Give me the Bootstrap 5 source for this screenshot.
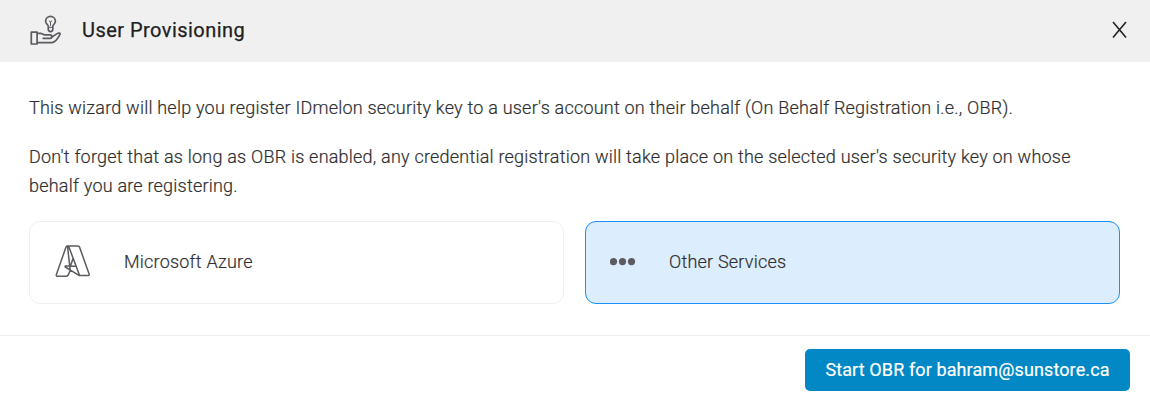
<!DOCTYPE html>
<html lang="en">
<head>
<meta charset="utf-8">
<meta name="viewport" content="width=device-width, initial-scale=1">
<title>User Provisioning</title>
<link href="https://cdn.jsdelivr.net/npm/bootstrap@5.3.0/dist/css/bootstrap.min.css" rel="stylesheet">
<style>
  body { font-family: Roboto, "Liberation Sans", sans-serif; font-size: 18px; font-weight: 300; line-height: 29px; color: #303030; letter-spacing: .215px; -webkit-text-stroke: .2px #303030; }
  .wizard { height: 401px; }
  .wizard-head { height: 62px; background: #f0f0f0; padding: 0 22px 2px 30px; }
  .wizard-title { font-size: 20px; font-weight: 400; letter-spacing: .46px; color: #212121; margin-left: 20px; -webkit-text-stroke: .25px #212121; }
  .wizard-body { padding: 31px 30px 0 29px; }
  .wizard-body p { margin-bottom: 20px; }
  .options { gap: 21px; margin-top: 21px; }
  .option { height: 83px; border: 1px solid #f0f0f0; border-radius: 11px; padding: 0 24px 2px; background: #fff; }
  .option.active { background: #dcedfd; border-color: #1890ff; }
  .option-icon { width: 36px; margin-right: 34px; }
  .active .option-icon { margin-right: 23px; }
  .wizard-foot { height: 66px; border-top: 1px solid #eee; padding: 13px 20px 11px; }
  .btn-start { height: 42px; width: 325px; padding: 0 0 2px; border: 0; border-radius: 5px; background: #0288c4; color: #fff; font-size: 18px; letter-spacing: .11px; -webkit-text-stroke: .2px #fff; }
</style>
</head>
<body>
<main class="wizard d-flex flex-column">
  <header class="wizard-head d-flex align-items-center">
    <svg width="32" height="32" viewBox="30 14 32 32" fill="none" stroke="#5b5b60" stroke-width="1.7" stroke-linejoin="round" stroke-linecap="round" aria-hidden="true">
      <path d="M31.300 32.200h5.800v11.800h-5.800z"/>
      <path d="M37.500 33.400h3c1.600 0 2.500 1.500 4.500 1.500h5.200c2.200 0 2.200 3.400 0 3.400h-7"/>
      <path d="M51.500 37.200l5.600-3.600c1.400-.9 3.600-.7 2.900.8c-1.800 3.600-5 7.900-8 8.200H37.500"/>
      <path d="M48.300 26.500c0-2.100-2.700-2.500-2.700-5.200a4.900 4.900 0 0 1 9.800 0c0 2.700-2.600 3.100-2.600 5.200v2.800c0 1.500-.9 2.300-2.200 2.300s-2.300-.8-2.300-2.300z"/>
      <path d="M49.200 21l1.300 1.100 1.300-1.100M50.500 22v3.500M48.500 27.300h4" stroke-width="1"/>
    </svg>
    <h1 class="wizard-title mb-0">User Provisioning</h1>
    <button type="button" class="btn p-0 border-0 ms-auto d-flex" aria-label="Close">
      <svg width="17" height="18" viewBox="0 0 17 18" fill="none" stroke="#222" stroke-width="1.6"><path d="M2 1l13 15.500M15 1L2 16.500"/></svg>
    </button>
  </header>
  <section class="wizard-body flex-grow-1">
    <p>This wizard will help you register IDmelon security key to a user's account on their behalf (On Behalf Registration i.e., OBR).</p>
    <p>Don't forget that as long as OBR is enabled, any credential registration will take place on the selected user's security key on whose behalf you are registering.</p>
    <div class="options d-flex">
      <div class="option d-flex align-items-center flex-fill w-50">
        <svg class="option-icon" width="36" height="36" viewBox="54 244 36 36" fill="none" stroke="#5b5b60" stroke-width="1.500" stroke-linejoin="round" aria-hidden="true">
          <path d="M67.500 246h10.400q1.200 0 1.600 1.100l9.600 26.800q.5 1.600-1.200 1.700h-8.500L65.300 267q-.6-.8.400-.9l4.800-.2L73.200 258M76 266.200h-5.600M70.200 270.200l-1.900 4.700q-.5 1.300-2 1.300h-8.700q-1.700 0-1.200-1.700L66 247q.4-1 1.500-1zM68 246q.6.200 1 1.200l10.600 28.400"/>
        </svg>
        <span>Microsoft Azure</span>
      </div>
      <div class="option active d-flex align-items-center flex-fill w-50">
        <svg class="option-icon" width="36" height="8" viewBox="0.500 1 36 8" fill="#5b5b60" aria-hidden="true"><circle cx="4" cy="4.600" r="3.600"/><circle cx="13" cy="4.600" r="3.600"/><circle cx="22" cy="4.600" r="3.600"/></svg>
        <span>Other Services</span>
      </div>
    </div>
  </section>
  <footer class="wizard-foot d-flex justify-content-end">
    <button type="button" class="btn btn-start">Start OBR for bahram@sunstore.ca</button>
  </footer>
</main>
<script src="https://cdn.jsdelivr.net/npm/bootstrap@5.3.0/dist/js/bootstrap.bundle.min.js"></script>
</body>
</html>
